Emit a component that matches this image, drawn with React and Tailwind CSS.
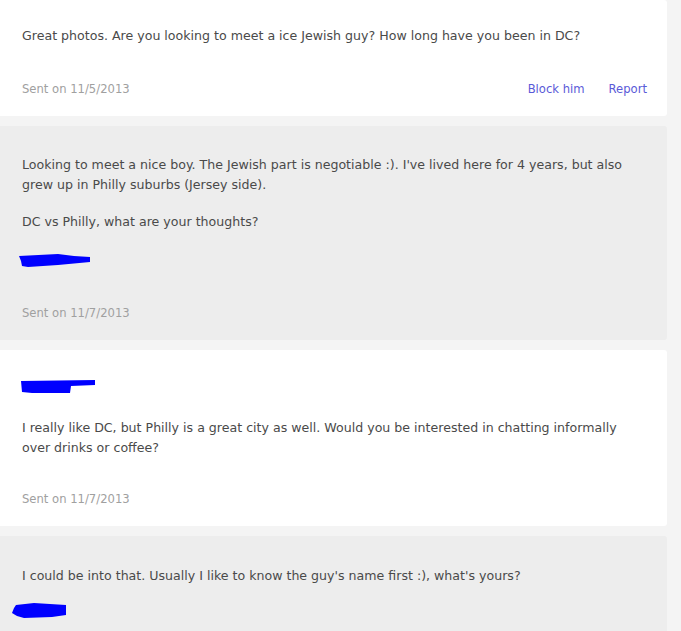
import React from "react";

// blue marker scribbles hiding names
const Scribble = ({ w, h, d }) => (
  <svg width={w} height={h} viewBox={`0 0 ${w} ${h}`} className="block">
    <path d={d} fill="#0000ff" />
  </svg>
);

const messages = [
  {
    bg: "bg-white",
    top: "pt-[26px]",
    gap: "mt-[33px]",
    paras: ["Great photos. Are you looking to meet a ice Jewish guy? How long have you been in DC?"],
    sent: "11/5/2013",
    actions: true,
  },
  {
    bg: "bg-[#ededed]",
    top: "pt-[29px]",
    gap: "mt-[36px]",
    paras: [
      "Looking to meet a nice boy. The Jewish part is negotiable :). I've lived here for 4 years, but also grew up in Philly suburbs (Jersey side).",
      "DC vs Philly, what are your thoughts?",
    ],
    sigAfter: "a",
    sent: "11/7/2013",
  },
  {
    bg: "bg-white",
    top: "pt-[30px]",
    gap: "mt-[31px]",
    sigBefore: true,
    paras: [
      "I really like DC, but Philly is a great city as well. Would you be interested in chatting informally over drinks or coffee?",
    ],
    sent: "11/7/2013",
  },
  {
    bg: "bg-[#ededed]",
    top: "pt-[30px]",
    paras: ["I could be into that. Usually I like to know the guy's name first :), what's yours?"],
    sigAfter: "b",
  },
];

const Message = ({ m }) => (
  <div className={`${m.bg} ${m.top} w-[667px] rounded-r-[3px] pl-[22px] pr-[20px] pb-[17px]`}>
    {m.sigBefore && (
      <div className="-ml-[2px] mb-[24px]">
        <Scribble w={76} h={14} d="M1 1 L75 0 L75 5 L51 6 L50 13 L12 13 L2 12 Z" />
      </div>
    )}
    {m.paras.map((p, i) => (
      <p key={i} className={i > 0 ? "mt-[17px]" : ""}>
        {p}
      </p>
    ))}
    {m.sigAfter === "a" && (
      <div className="-ml-[4px] mt-[21px]">
        <Scribble w={74} h={14} d="M1 3 L40 1 L56 3 L72 4 L72 9 L40 12 L10 14 L4 13 L3 8 Z" />
      </div>
    )}
    {m.sigAfter === "b" && (
      <div className="-ml-[10px] mt-[17px]">
        <Scribble w={56} h={16} d="M4 2 L22 0 L54 2 L54 12 L40 14 L12 15 L5 13 L0 10 L2 5 Z" />
      </div>
    )}
    {m.sent && (
      <div className={`flex items-center justify-between text-[11.6px] ${m.gap}`}>
        <span className="text-[#a0a0a0]">Sent on {m.sent}</span>
        {m.actions && (
          <div className="flex gap-[24px] text-[#5a5ad8]">
            <span>Block him</span>
            <span>Report</span>
          </div>
        )}
      </div>
    )}
  </div>
);

export default function App() {
  return (
    <div className="h-[631px] overflow-hidden bg-[#f4f4f4] font-['DejaVu_Sans',sans-serif] text-[12.6px] leading-[20px] text-[#4a4a4a]">
      <div className="flex flex-col gap-[10px]">
        {messages.map((m, i) => (
          <Message key={i} m={m} />
        ))}
      </div>
    </div>
  );
}
